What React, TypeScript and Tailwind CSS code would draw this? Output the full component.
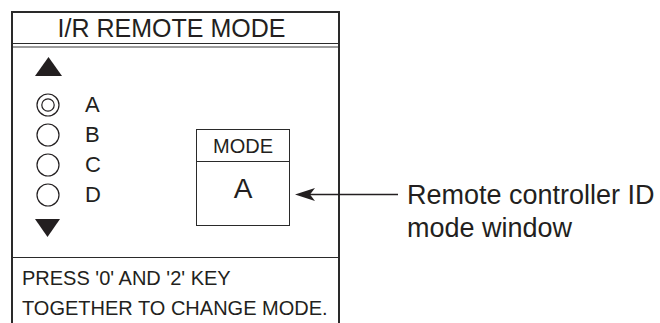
const rows = [
  { id: "A", selected: true },
  { id: "B", selected: false },
  { id: "C", selected: false },
  { id: "D", selected: false },
];

function RadioMark({ selected }: { selected: boolean }) {
  return (
    <svg width="26" height="26" viewBox="0 0 26 26" className="shrink-0">
      <circle cx="13" cy="13" r="11" fill="none" stroke="#231f20" strokeWidth="1.2" />
      {selected && <circle cx="13" cy="13" r="6.2" fill="none" stroke="#231f20" strokeWidth="1.2" />}
    </svg>
  );
}

export default function App() {
  return (
    <div className="relative w-[660px] h-[323px] overflow-hidden bg-white text-[#231f20] font-['Liberation_Sans',Arial,sans-serif]">
      <div className="flex items-start">
        {/* screen panel */}
        <div className="ml-[11px] mt-[11px] w-[329px] h-[330px] shrink-0 border-l-2 border-t-2 border-r-2 border-[#2a2a2a] flex flex-col">
          <div className="h-[31px] pr-[8px] flex items-center justify-center text-[25px] leading-none border-b border-[#2a2a2a]">
            I/R REMOTE MODE
          </div>
          <div className="mt-[2px] h-[2px] bg-[#9c9c9c]" />

          <div className="h-[210px] flex border-b border-[#2a2a2a]">
            <div className="w-[183px] pl-[22px] flex flex-col">
              <svg width="27" height="19" viewBox="0 0 27 19" className="mt-[9px]">
                <polygon points="13.5,0 27,19 0,19" fill="#231f20" />
              </svg>
              <div className="mt-[14px] flex flex-col">
                {rows.map((r) => (
                  <div key={r.id} className="h-[30px] flex items-center gap-[24px]">
                    <RadioMark selected={r.selected} />
                    <span className="text-[22px] leading-none">{r.id}</span>
                  </div>
                ))}
              </div>
              <svg width="25" height="18" viewBox="0 0 25 18" className="mt-[9px]">
                <polygon points="0,0 25,0 12.5,18" fill="#231f20" />
              </svg>
            </div>

            <div className="mt-[81px] w-[94px] h-[97px] border border-[#2a2a2a] flex flex-col">
              <div className="h-[32px] flex items-center justify-center text-[20px] leading-none border-b border-[#2a2a2a]">
                MODE
              </div>
              <div className="flex-1 flex items-center justify-center pb-[9px] text-[28px] leading-none">
                A
              </div>
            </div>
          </div>

          <div className="pt-[5px] pl-[9px] text-[20px] leading-[30px]">
            <p>PRESS &apos;0&apos; AND &apos;2&apos; KEY</p>
            <p>TOGETHER TO CHANGE MODE.</p>
          </div>
        </div>

        {/* callout label */}
        <div className="ml-[67px] mt-[179px] text-[27px] leading-[33px] whitespace-nowrap">
          <p>Remote controller ID</p>
          <p>mode window</p>
        </div>
      </div>

      {/* leader arrow */}
      <svg width="107" height="18" viewBox="0 0 107 18" className="absolute left-[293px] top-[186px]">
        <line x1="17" y1="8.5" x2="105" y2="8.5" stroke="#231f20" strokeWidth="1.5" />
        <polygon points="2,8.5 22,2 17,8.5 22,15" fill="#231f20" />
      </svg>
    </div>
  );
}
